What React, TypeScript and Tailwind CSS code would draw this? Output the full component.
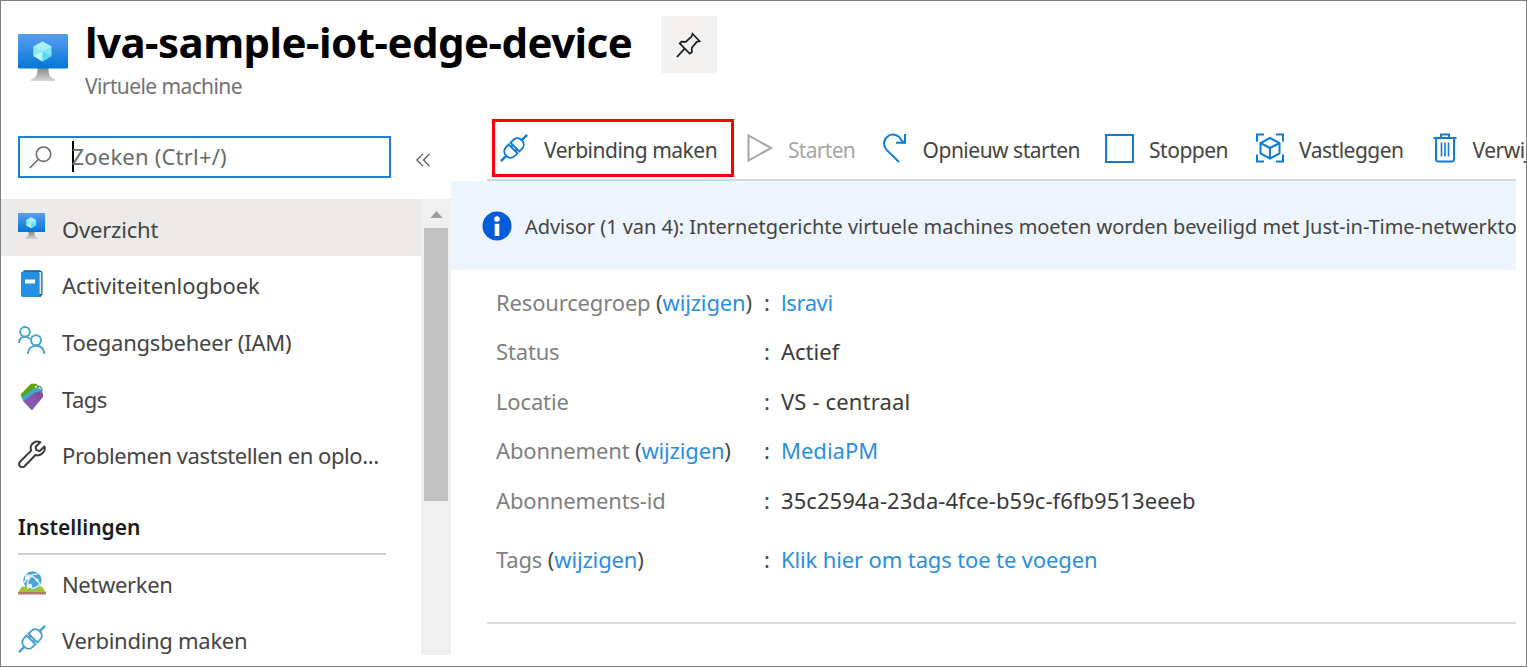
import type { ReactNode } from 'react';

function MonitorIcon({ className, id }: { className: string; id: string }) {
  return (
    <svg viewBox="0 0 50 47" className={className} preserveAspectRatio="none">
      <defs>
        <linearGradient id={`${id}-screen`} x1="0" y1="0" x2="0" y2="1">
          <stop offset="0" stopColor="#5a9df0" />
          <stop offset="1" stopColor="#0277d6" />
        </linearGradient>
        <linearGradient id={`${id}-stand`} x1="0" y1="0" x2="0" y2="1">
          <stop offset="0" stopColor="#8a8a8a" />
          <stop offset="1" stopColor="#d6d6d6" />
        </linearGradient>
      </defs>
      <path d="M19.5 34h11c0 6 .5 9.500 6.500 11.200V47H13v-1.800c6-1.700 6.500-5.200 6.500-11.200z" fill={`url(#${id}-stand)`} />
      <rect width="50" height="34.500" rx="1" fill={`url(#${id}-screen)`} />
      <path d="M24.500 7.500l9 5v9.500l-9 5.500-9-5.500v-9.500z" fill="#7fe6fb" />
      <path d="M24.500 7.500l9 5-9 5-9-5z" fill="#a8f0fd" />
      <path d="M15.500 12.500l9 5-9 4.500z" fill="#8ce9fb" />
      <path d="M15.500 22l9-4.500v10z" fill="#c3f1fa" />
      <path d="M24.500 17.500l9 4.500-9 5.500z" fill="#50dcf8" />
    </svg>
  );
}

function PlugIcon({ className }: { className: string }) {
  return (
    <svg viewBox="0 0 28 28" className={className} fill="none" stroke="currentColor" strokeWidth="1.900">
      <g transform="rotate(-45 14 14)">
        <path d="M-4.500 14H3M25 14h7.500" strokeWidth="2.400" />
        <path d="M12.700 7.800H9C5.500 7.800 3 10.500 3 14s2.500 6.200 6 6.200h3.700z" />
        <path d="M15.300 7.800H19c3.500 0 6 2.700 6 6.200s-2.500 6.200-6 6.200h-3.700z" />
        <path d="M12.700 11h2.600M12.700 17h2.600" />
      </g>
    </svg>
  );
}

function PinIcon() {
  return (
    <svg viewBox="0 0 26 27" className="mr-px h-[26px] w-[25px]" fill="none" stroke="#1b1b1b" strokeWidth="1.800" strokeLinejoin="miter">
      <path d="M17.200 1.800l7.400 7.800-3 .6-5.200 6.200.2 4.400-2.300 1.700L3.900 12l1.800-2 4.400.2 6-5.300z" />
      <path d="M9 17.300L1 26" />
    </svg>
  );
}

function BookIcon() {
  return (
    <svg viewBox="0 0 23 28" className="h-7 w-[23px]">
      <path d="M3.500.5h17.300L22.500 2v22.500L20.500 27H3z" fill="#1768ad" />
      <path d="M4 2h17.200v22H4z" fill="#e6eef5" />
      <path d="M1 3.300C1 2.500 1.600 2 2.400 2h15.800c.9 0 1.400.6 1.400 1.400v22.200c0 .9-.5 1.400-1.400 1.400H2.400C1.500 27 1 26.500 1 25.600z" fill="#2291e3" />
      <path d="M2 2.700L4 .6h16" fill="none" stroke="#367fb9" />
      <rect x="5" y="9.500" width="10" height="4" fill="#fff" />
    </svg>
  );
}

function PeopleIcon() {
  return (
    <svg viewBox="0 0 28 28" className="h-7 w-7" fill="none" stroke="#48a0cf" strokeWidth="1.900">
      <circle cx="7" cy="5.800" r="4.800" />
      <circle cx="18" cy="14.200" r="5" />
      <path d="M1 17c0-3.800 2.300-6.300 6-6.300 2 0 3.800.7 4.900 2.200M9.700 28c.4-5 3.500-8.300 8.300-8.300s7.900 3.300 8.500 8.300" />
    </svg>
  );
}

function TagsIcon() {
  return (
    <svg viewBox="0 0 24 28" className="h-7 w-6">
      <path d="M.5 11.500L11 .7h5.500L19 4.500 2.500 16z" fill="#5ea30c" />
      <path d="M1.500 14.500L14.500 5l6 .5L22 9 4 19.500z" fill="#42a5cf" />
      <path d="M3.500 18.500L14 10l8-2 1 5.500L12 27.500z" fill="#8a56aa" />
      <path d="M14 10l8-2 1 5.500-5 6.200z" fill="#8250a3" />
      <path d="M16.500 3.500c3-1 5.500.5 5.500 3s-2 4.500-3.500 4" fill="none" stroke="#48839a" strokeWidth="1.200" />
      <circle cx="16" cy="3.800" r="1.100" fill="#e6f3dd" />
      <circle cx="19.500" cy="10.800" r="1.100" fill="#604a8c" />
    </svg>
  );
}

function WrenchIcon() {
  return (
    <svg viewBox="0 0 28 28" className="h-7 w-7" fill="none" stroke="#3b3b3b" strokeWidth="2" strokeLinejoin="round">
      <path d="M22.300 2.200c-4.500-2.200-9.800 1.200-9.600 6.300 0 .8.200 1.500.4 2.100L2 21.700c-1.300 1.300-1.300 3.300 0 4.500s3.200 1.200 4.500 0l11-11.200c5.200 1.700 10.500-3.300 9-8.500L21.700 11l-3.300-.9-.8-3.400z" />
    </svg>
  );
}

function NetworkIcon() {
  return (
    <svg viewBox="0 0 28 24" className="mt-[2px] h-6 w-7">
      <path d="M4 15.500h20l4 6H0z" fill="#a2c62b" />
      <rect y="21" width="28" height="2.500" fill="#b07866" />
      <circle cx="14.500" cy="9.500" r="9.200" fill="#4ba6d5" />
      <path d="M7 4.500c5-1.500 10.500 2 14.500 8M6 12c2-5 8-9.500 14-9M10 18c-2-5 .5-10 4-14M13 17.500c3 0 7-1.500 9.500-5" fill="none" stroke="#d7eef8" strokeWidth="1.500" />
      <circle cx="9" cy="7" r="2" fill="#fff" />
      <circle cx="12" cy="15" r="2.200" fill="#fff" />
      <circle cx="19" cy="9" r="1.500" fill="#fff" />
    </svg>
  );
}

function RestartIcon() {
  return (
    <svg viewBox="0 0 24 30" className="h-[30px] w-6" fill="none" stroke="#0f7cd8" strokeWidth="2">
      <path d="M16 29L3.600 16.900A9 9 0 1 1 18.500 7.500L21 9.500" />
      <path d="M22 1v8.700H13" />
    </svg>
  );
}

function CaptureIcon() {
  return (
    <svg viewBox="0 0 28 30" className="h-[30px] w-7" fill="none" stroke="#0f7cd8" strokeWidth="2">
      <path d="M1 8.500V1.500h7M20 1.500h7v7M27 21.500v7h-7M8 28.500H1v-7" />
      <path d="M14 5l9.500 5v10.500L14 25.500l-9.500-5V10zM4.500 10L14 15l9.500-5M14 15v10.500" />
    </svg>
  );
}

function TrashIcon() {
  return (
    <svg viewBox="0 0 24 30" className="h-[30px] w-6" fill="none" stroke="#0f7cd8" strokeWidth="2">
      <path d="M.5 5h23M8 5V1.500h8V5M3 5v21c0 1.600.8 2.500 2.500 2.500h13c1.700 0 2.500-.9 2.500-2.500V5" />
      <path d="M8.500 9.500v14M12 9.500v14M15.500 9.500v14" strokeWidth="1.600" />
    </svg>
  );
}

function NavItem({ icon, label, active = false, tracking = '' }: { icon: ReactNode; label: string; active?: boolean; tracking?: string }) {
  return (
    <a className={active ? 'flex h-[56.600px] shrink-0 items-center bg-[#ecebe9] pl-[17px]' : 'flex h-[56.600px] shrink-0 items-center pl-[17px]'}>
      <span className="flex w-11 items-center">{icon}</span>
      <span className={`mt-[3px] text-[22px] leading-[30px] whitespace-nowrap text-[#444444] ${tracking}`}>{label}</span>
    </a>
  );
}

function Tool({ children, tracking = 'tracking-[-0.500px]' }: { children: string; tracking?: string }) {
  return <span className={`mt-[4px] text-[21px] leading-[30px] whitespace-nowrap ${tracking}`}>{children}</span>;
}

type DetailProps = {
  label: string;
  change?: boolean;
  value: string;
  link?: boolean;
  tracking?: string;
};

function Detail({ label, change = false, value, link = false, tracking = '' }: DetailProps) {
  return (
    <div className="flex h-[49.500px] items-center text-[22px] leading-[30px] whitespace-nowrap">
      <span className="w-[268px] tracking-[-0.160px] text-[#7f7f7f]">
        {label}
        {change && (
          <>
            {' '}
            <span className="text-[#4a4a4a]">(</span>
            <a className="text-[#2b8ee0]">wijzigen</a>
            <span className="text-[#4a4a4a]">)</span>
          </>
        )}
      </span>
      <span className="w-[17px] text-[#4a4a4a]">:</span>
      <span className={link ? `text-[#2b8ee0] ${tracking}` : `text-[#3a3a3a] ${tracking}`}>{value}</span>
    </div>
  );
}

export default function App() {
  return (
    <div className="flex h-[667px] w-[1527px] flex-col overflow-hidden border border-[#7f7f7f] bg-white font-['Noto_Sans','Open_Sans',sans-serif]">
      <header className="flex h-[118px] shrink-0 items-start pl-[17px]">
        <MonitorIcon id="header-vm" className="mt-[33px] h-[47px] w-[50px]" />
        <div className="ml-[17px] w-[576px]">
          <h1 className="mt-[13px] text-[42px] leading-[56px] font-bold tracking-[-0.530px] whitespace-nowrap text-black">lva-sample-iot-edge-device</h1>
          <p className="mt-px text-[21px] leading-[30px] tracking-[-0.600px] text-[#737373]">Virtuele machine</p>
        </div>
        <button className="mt-[15px] flex h-[57px] w-14 items-center justify-center bg-[#f3f2f1]">
          <PinIcon />
        </button>
      </header>

      <div className="flex min-h-0 flex-1">
        <aside className="flex w-[450px] shrink-0 flex-col">
          <div className="flex h-[80px] shrink-0 items-start pt-[17px] pl-[17px]">
            <div className="flex h-[42px] w-[373px] items-center border-2 border-[#1f80d6] pl-[9px]">
              <svg viewBox="0 0 23 23" className="h-[23px] w-[23px]" fill="none" stroke="#6b6b6b" strokeWidth="1.600">
                <circle cx="14.500" cy="8.200" r="7.200" />
                <path d="M9.300 13.500L.8 22" />
              </svg>
              <span className="ml-[20px] mb-[2px] h-[31px] w-[1.500px] bg-black" />
              <span className="mb-[2px] -ml-[2px] text-[22px] leading-[30px] tracking-[0.200px] text-[#6b6b6b]">Zoeken (Ctrl+/)</span>
            </div>
            <svg viewBox="0 0 16 14" className="mt-[17px] ml-[25px] h-[14px] w-[15px]" fill="none" stroke="#5a5a5a" strokeWidth="1.400">
              <path d="M7.500.5L1 7l6.500 6.500M14.500.5L8 7l6.500 6.500" />
            </svg>
          </div>
          <div className="flex h-[456px] overflow-hidden">
            <nav className="flex w-[420px] flex-col">
              <NavItem active icon={<MonitorIcon id="nav-vm" className="mb-[3px] h-[26px] w-[27px]" />} label="Overzicht" tracking="tracking-[-0.200px]" />
              <NavItem icon={<span className="ml-[2px]"><BookIcon /></span>} label="Activiteitenlogboek" tracking="tracking-[-0.040px]" />
              <NavItem icon={<PeopleIcon />} label="Toegangsbeheer (IAM)" tracking="tracking-[-0.220px]" />
              <NavItem icon={<span className="ml-[2px]"><TagsIcon /></span>} label="Tags" tracking="tracking-[-0.500px]" />
              <NavItem icon={<WrenchIcon />} label="Problemen vaststellen en oplo..." tracking="tracking-[-0.430px]" />
              <div className="-mb-px ml-[17px] flex h-[73px] w-[368px] shrink-0 items-end border-b-2 border-[#d0d0d0] pb-[11px]">
                <h2 className="text-[21px] leading-[30px] font-semibold text-[#1b1b1b]">Instellingen</h2>
              </div>
              <NavItem icon={<NetworkIcon />} label="Netwerken" tracking="tracking-[-0.350px]" />
              <NavItem icon={<PlugIcon className="h-7 w-7 text-[#48a0cf]" />} label="Verbinding maken" tracking="tracking-[-0.280px]" />
            </nav>
            <div className="flex w-[30px] flex-col items-start bg-[#f0f0f0] pl-[3px]">
              <svg viewBox="0 0 14 8" className="mt-[12px] mb-[10px] ml-[6px] h-[7px] w-[13px]">
                <path d="M7 0l7 8H0z" fill="#9d9d9d" />
              </svg>
              <div className="h-[273px] w-6 bg-[#c1c1c1]" />
            </div>
          </div>
        </aside>

        <main className="flex min-w-0 flex-1 flex-col">
          <div className="ml-[36px] flex h-[60px] shrink-0 items-start text-[#444444]">
            <button className="ml-[5px] flex h-[58px] w-[242px] shrink-0 items-center border-[3px] border-[#ff0000] pl-[5px]">
              <PlugIcon className="h-7 w-7 text-[#0f7cd8]" />
              <span className="w-4" />
              <Tool>Verbinding maken</Tool>
            </button>
            <button className="ml-[13px] flex h-[58px] items-center text-[#a6a6a6]">
              <svg viewBox="0 0 26 28" className="mr-[15px] h-7 w-[26px]" fill="none" stroke="#a6a6a6" strokeWidth="2">
                <path d="M1.500 1.500v25L24 14z" />
              </svg>
              <Tool tracking="tracking-[-0.700px]">Starten</Tool>
            </button>
            <button className="ml-[27.500px] flex h-[58px] items-center">
              <RestartIcon />
              <span className="w-4" />
              <Tool>Opnieuw starten</Tool>
            </button>
            <button className="ml-[25px] flex h-[58px] items-center">
              <span className="mr-[15px] h-[29px] w-[29px] border-[2.500px] border-[#0f7cd8]" />
              <Tool>Stoppen</Tool>
            </button>
            <button className="ml-[28px] flex h-[58px] items-center">
              <CaptureIcon />
              <span className="w-[15px]" />
              <Tool>Vastleggen</Tool>
            </button>
            <button className="ml-[29px] flex h-[58px] items-center">
              <TrashIcon />
              <span className="w-4" />
              <Tool>Verwijderen</Tool>
            </button>
          </div>
          <div className="mr-[10px] ml-[36px] h-[2px] shrink-0 bg-[#d5d7da]" />
          <div className="mr-[10px] flex h-[89px] shrink-0 items-center overflow-hidden bg-[#eef5ff] pl-[31px]">
            <svg viewBox="0 0 30 30" className="h-[30px] w-[30px] shrink-0">
              <circle cx="15" cy="15" r="14.500" fill="#015cda" />
              <circle cx="15" cy="8" r="2.800" fill="#fff" />
              <path d="M12.700 12.800h4.600V25h-4.600z" fill="#fff" />
            </svg>
            <span className="mt-[2px] ml-[13px] text-[20px] leading-[30px] tracking-[-0.045px] whitespace-nowrap text-[#444444]">
              Advisor (1 van 4): Internetgerichte virtuele machines moeten worden beveiligd met Just-in-Time-netwerktoegangsbeheer
            </span>
          </div>
          <section className="mr-[10px] ml-[36px] flex h-[354px] flex-col border-b-2 border-[#dcdcdc] pt-[7px] pl-[9px]">
            <Detail label="Resourcegroep" change value="lsravi" link tracking="tracking-[-0.400px]" />
            <Detail label="Status" value="Actief" />
            <Detail label="Locatie" value="VS - centraal" tracking="tracking-[0.150px]" />
            <Detail label="Abonnement" change value="MediaPM" link />
            <Detail label="Abonnements-id" value="35c2594a-23da-4fce-b59c-f6fb9513eeeb" tracking="tracking-[0.060px]" />
            <div className="h-[10px]" />
            <Detail label="Tags" change value="Klik hier om tags toe te voegen" link tracking="tracking-[-0.130px]" />
          </section>
        </main>
      </div>
    </div>
  );
}
